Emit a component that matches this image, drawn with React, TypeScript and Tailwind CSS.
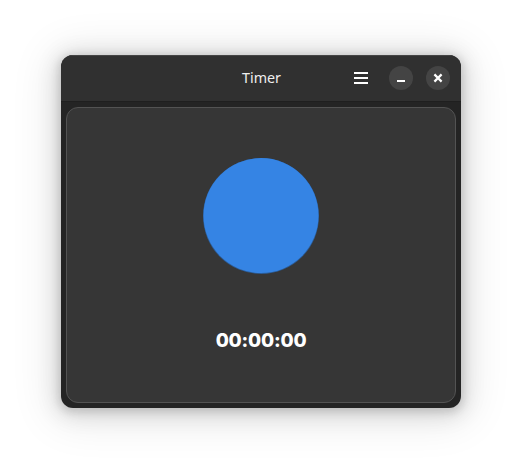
function HeaderBar() {
  return (
    <header className="grid h-[46px] shrink-0 grid-cols-[1fr_auto_1fr] items-center bg-[#303030] px-[11px] shadow-[inset_0_1px_0_#454545]">
      <span />
      <h1 className="pl-px font-['Noto_Sans',sans-serif] text-[14.3px] leading-5 font-normal text-[#eeeeee]">
        Timer
      </h1>
      <div className="flex items-center justify-end">
        <button aria-label="Menu" className="mr-5 flex size-4 items-center justify-center">
          <svg width="16" height="16" viewBox="0 0 16 16" fill="#fff" shapeRendering="crispEdges">
            <path d="M1 2h14v2H1zM1 7h14v2H1zM1 12h14v2H1z" />
          </svg>
        </button>
        <button aria-label="Minimize" className="mr-[13px] flex size-6 items-center justify-center rounded-full bg-[#444444]">
          <svg width="16" height="16" viewBox="0 0 16 16" fill="#fff">
            <path d="M4 10h8v2H4z" />
          </svg>
        </button>
        <button aria-label="Close" className="flex size-6 items-center justify-center rounded-full bg-[#444444]">
          <svg width="16" height="16" viewBox="0 0 16 16" fill="none" stroke="#fff" strokeWidth="2.2">
            <path d="M4.4 4.4l7.2 7.2M11.6 4.4l-7.2 7.2" />
          </svg>
        </button>
      </div>
    </header>
  );
}

export default function App() {
  return (
    <main className="h-[475px] w-[522px] overflow-hidden bg-white px-[61px] pt-[55px]">
      <section className="flex h-[353px] w-[400px] flex-col overflow-hidden rounded-xl bg-[#242424] shadow-[0_2px_8px_2px_rgba(0,0,0,0.13),0_3px_20px_6px_rgba(0,0,0,0.1),0_4px_44px_10px_rgba(0,0,0,0.09)]">
        <HeaderBar />
        <div className="flex grow flex-col border-t border-[#1f1f1f] px-[5px] pt-[5px] pb-[5px]">
          <div className="flex grow flex-col items-center rounded-xl border border-[#535353] bg-[#363636] pt-[50px]">
            <svg width="118" height="118" viewBox="0 0 118 118" className="-mt-px block">
              <circle cx="59" cy="59" r="58" fill="#2c5c96" />
              <circle cx="59" cy="58.6" r="57.5" fill="#3584e4" />
            </svg>
            <p className="mt-[52px] font-['Inter',sans-serif] text-[19px] leading-7 font-extrabold tracking-[-0.2px] text-white [font-feature-settings:'calt'_0]">
              00:00:00
            </p>
          </div>
        </div>
      </section>
    </main>
  );
}
